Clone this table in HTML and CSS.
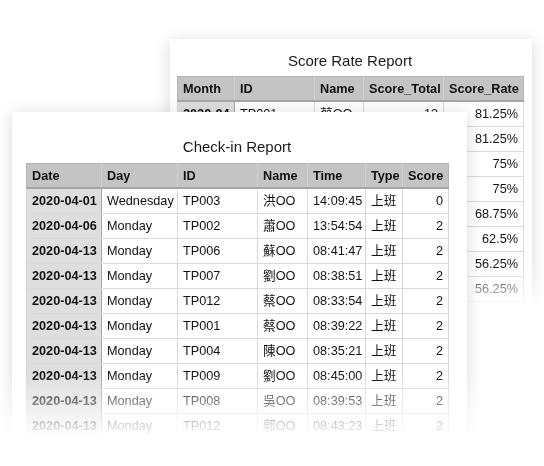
FILE: index.html
```html
<!DOCTYPE html>
<html lang="zh-Hant">
<head>
<meta charset="utf-8">
<title>Reports</title>
<link rel="stylesheet" href="styles.css">
</head>
<body>
<div class="stage">
  <div class="frame frame-back">
  <section class="card card-back">
    <h2 class="title">Score Rate Report</h2>
    <table class="report report-rate">
      <colgroup><col class="c-month"><col class="c-id2"><col class="c-name2"><col class="c-total"><col class="c-rate"></colgroup>
      <thead><tr><th>Month</th><th>ID</th><th>Name</th><th>Score_Total</th><th>Score_Rate</th></tr></thead>
      <tbody>
        <tr><td class="key">2020-04</td><td>TP001</td><td>蔡OO</td><td class="num">13</td><td class="num">81.25%</td></tr>
        <tr><td class="key">2020-04</td><td>TP004</td><td>陳OO</td><td class="num">13</td><td class="num">81.25%</td></tr>
        <tr><td class="key">2020-04</td><td>TP006</td><td>蘇OO</td><td class="num">12</td><td class="num">75%</td></tr>
        <tr><td class="key">2020-04</td><td>TP007</td><td>劉OO</td><td class="num">12</td><td class="num">75%</td></tr>
        <tr><td class="key">2020-04</td><td>TP009</td><td>劉OO</td><td class="num">11</td><td class="num">68.75%</td></tr>
        <tr><td class="key">2020-04</td><td>TP012</td><td>蔡OO</td><td class="num">10</td><td class="num">62.5%</td></tr>
        <tr><td class="key">2020-04</td><td>TP008</td><td>吳OO</td><td class="num">9</td><td class="num">56.25%</td></tr>
        <tr><td class="key">2020-04</td><td>TP002</td><td>蕭OO</td><td class="num">9</td><td class="num">56.25%</td></tr>
      </tbody>
    </table>
  </section>
  </div>

  <div class="frame frame-front">
  <section class="card card-front">
    <h2 class="title">Check-in Report</h2>
    <table class="report report-checkin">
      <colgroup><col class="c-date"><col class="c-day"><col class="c-id"><col class="c-name"><col class="c-time"><col class="c-type"><col class="c-score"></colgroup>
      <thead><tr><th>Date</th><th>Day</th><th>ID</th><th>Name</th><th>Time</th><th>Type</th><th>Score</th></tr></thead>
      <tbody>
        <tr><td class="key">2020-04-01</td><td>Wednesday</td><td>TP003</td><td>洪OO</td><td>14:09:45</td><td>上班</td><td class="num">0</td></tr>
        <tr><td class="key">2020-04-06</td><td>Monday</td><td>TP002</td><td>蕭OO</td><td>13:54:54</td><td>上班</td><td class="num">2</td></tr>
        <tr><td class="key">2020-04-13</td><td>Monday</td><td>TP006</td><td>蘇OO</td><td>08:41:47</td><td>上班</td><td class="num">2</td></tr>
        <tr><td class="key">2020-04-13</td><td>Monday</td><td>TP007</td><td>劉OO</td><td>08:38:51</td><td>上班</td><td class="num">2</td></tr>
        <tr><td class="key">2020-04-13</td><td>Monday</td><td>TP012</td><td>蔡OO</td><td>08:33:54</td><td>上班</td><td class="num">2</td></tr>
        <tr><td class="key">2020-04-13</td><td>Monday</td><td>TP001</td><td>蔡OO</td><td>08:39:22</td><td>上班</td><td class="num">2</td></tr>
        <tr><td class="key">2020-04-13</td><td>Monday</td><td>TP004</td><td>陳OO</td><td>08:35:21</td><td>上班</td><td class="num">2</td></tr>
        <tr><td class="key">2020-04-13</td><td>Monday</td><td>TP009</td><td>劉OO</td><td>08:45:00</td><td>上班</td><td class="num">2</td></tr>
        <tr><td class="key">2020-04-13</td><td>Monday</td><td>TP008</td><td>吳OO</td><td>08:39:53</td><td>上班</td><td class="num">2</td></tr>
        <tr><td class="key">2020-04-13</td><td>Monday</td><td>TP012</td><td>郭OO</td><td>08:43:23</td><td>上班</td><td class="num">2</td></tr>
      </tbody>
    </table>
  </section>
  </div>
</div>
</body>
</html>
```

FILE: styles.css
```css
* { box-sizing: border-box; }

html, body {
  margin: 0;
  padding: 0;
  background: #ffffff;
}

body {
  width: 544px;
  height: 466px;
  overflow: hidden;
  font-family: "Liberation Sans", "Noto Sans CJK TC", Arial, sans-serif;
  color: #111;
}

.stage {
  display: grid;
  grid-template-columns: 544px;
  grid-template-rows: 466px;
}

.frame {
  grid-area: 1 / 1;
  align-self: start;
  justify-self: start;
}

.frame-back {
  margin-left: 150px;
  margin-top: 19px;
  padding: 20px;
  -webkit-mask-image: linear-gradient(to bottom, #000 246px, rgba(0,0,0,0) 292px);
  mask-image: linear-gradient(to bottom, #000 246px, rgba(0,0,0,0) 292px);
}

.frame-front {
  margin-left: 0;
  margin-top: 92px;
  padding: 20px 20px 20px 12px;
  -webkit-mask-image: linear-gradient(to bottom, #000 282px, rgba(0,0,0,0) 346px);
  mask-image: linear-gradient(to bottom, #000 282px, rgba(0,0,0,0) 346px);
}

.card {
  background: #ffffff;
  box-shadow: 0 2px 16px rgba(0, 0, 0, 0.15);
}

.card-back {
  width: 362px;
  padding: 13px 9px 14px 7px;
}

.card-front {
  width: 455px;
  padding: 26px 19px 12px 14px;
}

.title {
  margin: 0;
  font-size: 15px;
  line-height: 18px;
  font-weight: normal;
  text-align: center;
  color: #1a1a1a;
}

.card-back .title { margin-bottom: 6px; }
.card-front .title { margin-bottom: 7px; }

.report {
  border-collapse: collapse;
  table-layout: fixed;
  font-size: 12.7px;
  line-height: 16px;
}

.report-checkin { width: 422px; }
.report-rate { width: 346px; }

.c-date { width: 75px; }
.c-day { width: 76px; }
.c-id { width: 80px; }
.c-name { width: 50px; }
.c-time { width: 58px; }
.c-type { width: 37px; }
.c-score { width: 46px; }

.c-month { width: 57px; }
.c-id2 { width: 80px; }
.c-name2 { width: 49px; }
.c-total { width: 80px; }
.c-rate { width: 80px; }

.report th,
.report td {
  padding: 4px 5px;
  border: 1px solid #d9d9d9;
  white-space: nowrap;
  overflow: hidden;
  text-align: left;
}

.report th {
  background: #c4c4c4;
  font-weight: bold;
  color: #111;
  border-color: #d2d2d2;
  border-top-color: #b4b4b4;
  border-bottom: 2px solid #a6a6a6;
  padding-top: 4px;
  padding-bottom: 3px;
}

.report thead th:first-child { border-left-color: #b4b4b4; }
.report thead th:last-child { border-right-color: #b4b4b4; }

.report td.key {
  background: #dedede;
  font-weight: bold;
  border-right-color: #a4a4a4;
}

.report td.num {
  text-align: right;
}
```
